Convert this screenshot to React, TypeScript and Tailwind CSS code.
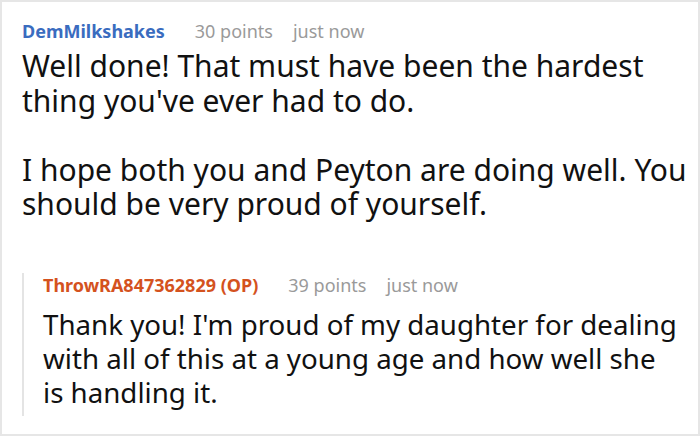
const font = { fontFamily: '"Noto Sans", "Open Sans", sans-serif' };

function Meta({ name, color, points }: { name: string; color: string; points: number }) {
  return (
    <div className="flex items-center text-[18px] leading-[24px]">
      <span className={`font-bold ${color}`}>{name}</span>
      <span className="ml-[30px] text-[#9a9a9a]">{points} points</span>
      <span className="ml-[20px] text-[#9a9a9a]">just now</span>
    </div>
  );
}

export default function App() {
  return (
    <div
      className="w-[700px] h-[436px] overflow-hidden border-2 border-[#e6e6e6] bg-white pl-[20px] pr-[6px] pt-[17px]"
      style={font}
    >
      <Meta name="DemMilkshakes" color="text-[#3a6cbf]" points={30} />
      <div className="mt-[6px] text-[30px] leading-[34.5px] text-[#111]">
        <p>Well done! That must have been the hardest thing you've ever had to do.</p>
        <p className="mt-[34.5px]">
          I hope both you and Peyton are doing well. You should be very proud of yourself.
        </p>
      </div>
      <div className="mt-[51px] mr-[12px] border-l-2 border-[#e4e4e4] pl-[19px] pb-[7px]">
        <Meta name="ThrowRA847362829 (OP)" color="text-[#d4521e]" points={39} />
        <p className="mt-[10px] text-[27.7px] leading-[34px] text-[#111]">
          Thank you! I'm proud of my daughter for dealing with all of this at a young age and how
          well she is handling it.
        </p>
      </div>
    </div>
  );
}
